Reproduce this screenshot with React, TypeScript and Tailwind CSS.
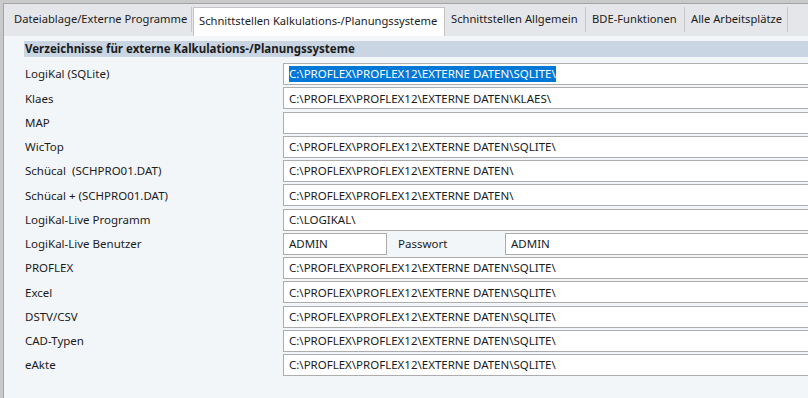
import React from "react";

const PATH = "C:\\PROFLEX\\PROFLEX12\\EXTERNE DATEN\\SQLITE\\";

const rows: { label: string; value: string; selected?: boolean }[] = [
  { label: "LogiKal (SQLite)", value: PATH, selected: true },
  { label: "Klaes", value: "C:\\PROFLEX\\PROFLEX12\\EXTERNE DATEN\\KLAES\\" },
  { label: "MAP", value: "" },
  { label: "WicTop", value: PATH },
  { label: "Schücal  (SCHPRO01.DAT)", value: "C:\\PROFLEX\\PROFLEX12\\EXTERNE DATEN\\" },
  { label: "Schücal + (SCHPRO01.DAT)", value: "C:\\PROFLEX\\PROFLEX12\\EXTERNE DATEN\\" },
  { label: "LogiKal-Live Programm", value: "C:\\LOGIKAL\\" },
];

const rows2 = [
  { label: "PROFLEX", value: PATH },
  { label: "Excel", value: PATH },
  { label: "DSTV/CSV", value: PATH },
  { label: "CAD-Typen", value: PATH },
  { label: "eAkte", value: PATH },
];

function Field({ value, selected, className = "" }: { value: string; selected?: boolean; className?: string }) {
  return (
    <div className={`h-[22px] bg-white border border-[#adadad] flex items-center pl-[5px] whitespace-nowrap overflow-hidden ${className}`}>
      {selected ? <span className="bg-[#0078d7] text-white leading-[16px]">{value}</span> : value}
    </div>
  );
}

function Tab({ label, className = "" }: { label: string; className?: string }) {
  return (
    <div className={`h-[29px] shrink-0 flex items-center whitespace-nowrap pb-[4px] ${className}`}>
      <span className="flex-1">{label}</span>
      <span className="w-px h-[25px] bg-[#c6c6c6]" />
    </div>
  );
}

export default function App() {
  return (
    <div
      className="w-[808px] h-[398px] overflow-hidden bg-[#c9c9c9] pl-[3px] pt-[3px] text-[11.5px] text-[#1b1b1b]"
      style={{ fontFamily: '"Noto Sans", sans-serif' }}
    >
      <div className="w-[830px] h-full border-l border-t border-[#a3a3a3] bg-[#f3f6f9] flex flex-col">
        {/* Tabs */}
        <div className="h-[32px] bg-[#e4e6e9] flex items-end shrink-0 text-[11.2px]">
          <Tab label="Dateiablage/Externe Programme" className="w-[188px] pl-[10px]" />
          <div className="h-[29px] w-[252px] ml-[1px] shrink-0 whitespace-nowrap bg-white border border-b-0 border-[#c4c4c4] pl-[5px] flex items-center pb-[2px]">
            Schnittstellen Kalkulations-/Planungssysteme
          </div>
          <Tab label="Schnittstellen Allgemein" className="w-[141px] pl-[6px]" />
          <Tab label="BDE-Funktionen" className="w-[99px] pl-[6px]" />
          <Tab label="Alle Arbeitsplätze" className="w-[103px] pl-[6px]" />
        </div>

        {/* Content */}
        <div className="pl-[20px] pt-[5px] flex flex-col">
          <div className="h-[16px] bg-[#c9d5e3] font-bold pl-[1px] flex items-center mb-[6px] whitespace-nowrap">
            Verzeichnisse für externe Kalkulations-/Planungssysteme
          </div>
          <div className="flex flex-col gap-[2.25px]">
            {rows.map((r) => (
              <div key={r.label} className="flex items-center">
                <div className="w-[259px] pl-[1px] whitespace-pre">{r.label}</div>
                <Field value={r.value} selected={r.selected} className="flex-1" />
              </div>
            ))}
            <div className="flex items-center">
              <div className="w-[259px] pl-[1px]">LogiKal-Live Benutzer</div>
              <Field value="ADMIN" className="w-[104px]" />
              <div className="w-[118px] pl-[11px]">Passwort</div>
              <Field value="ADMIN" className="flex-1" />
            </div>
            {rows2.map((r) => (
              <div key={r.label} className="flex items-center">
                <div className="w-[259px] pl-[1px]">{r.label}</div>
                <Field value={r.value} className="flex-1" />
              </div>
            ))}
          </div>
        </div>
      </div>
    </div>
  );
}
